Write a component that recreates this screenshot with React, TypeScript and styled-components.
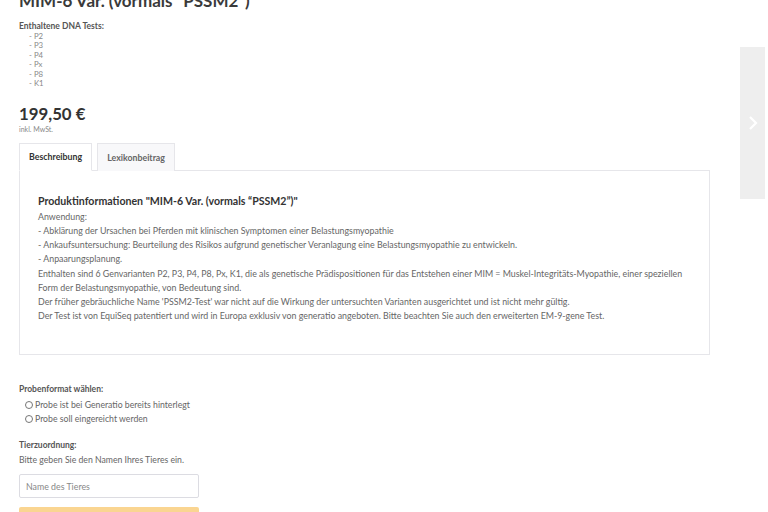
import * as React from 'react'
import styled, { createGlobalStyle } from 'styled-components'

const GlobalStyle = createGlobalStyle`
  html, body {
    margin: 0;
    padding: 0;
    background: #fff;
    font-family: Lato, "Open Sans", sans-serif;
    color: #666;
  }
`

const tests = ['P2', 'P3', 'P4', 'Px', 'P8', 'K1']

const infoLines = [
  'Anwendung:',
  '- Abklärung der Ursachen bei Pferden mit klinischen Symptomen einer Belastungsmyopathie',
  '- Ankaufsuntersuchung: Beurteilung des Risikos aufgrund genetischer Veranlagung eine Belastungsmyopathie zu entwickeln.',
  '- Anpaarungsplanung.',
  'Enthalten sind 6 Genvarianten P2, P3, P4, P8, Px, K1, die als genetische Prädispositionen für das Entstehen einer MIM = Muskel-Integritäts-Myopathie, einer speziellen Form der Belastungsmyopathie, von Bedeutung sind.',
  "Der früher gebräuchliche Name 'PSSM2-Test' war nicht auf die Wirkung der untersuchten Varianten ausgerichtet und ist nicht mehr gültig.",
  'Der Test ist von EquiSeq patentiert und wird in Europa exklusiv von generatio angeboten. Bitte beachten Sie auch den erweiterten EM-9-gene Test.',
]

export default function App() {
  const [tab, setTab] = React.useState(0)
  return (
    <>
      <GlobalStyle />
      <Page>
        <Title>MIM-6 Var. (vormals “PSSM2”)</Title>

        <Label>Enthaltene DNA Tests:</Label>
        <TestList>
          {tests.map(t => (
            <li key={t}>- {t}</li>
          ))}
        </TestList>

        <Price>199,50 €</Price>
        <Tax>inkl. MwSt.</Tax>

        <Tabs>
          <Tab active={tab === 0} onClick={() => setTab(0)}>
            Beschreibung
          </Tab>
          <Tab active={tab === 1} onClick={() => setTab(1)}>
            Lexikonbeitrag
          </Tab>
        </Tabs>
        <Panel>
          <PanelHeading>Produktinformationen "MIM-6 Var. (vormals “PSSM2”)"</PanelHeading>
          <PanelText>
            {infoLines.map((l, i) => (
              <span key={i}>
                {l}
                <br />
              </span>
            ))}
          </PanelText>
        </Panel>

        <Section>
          <Label>Probenformat wählen:</Label>
          <Radios>
            <RadioRow>
              <input type="radio" name="probe" />
              Probe ist bei Generatio bereits hinterlegt
            </RadioRow>
            <RadioRow>
              <input type="radio" name="probe" />
              Probe soll eingereicht werden
            </RadioRow>
          </Radios>
        </Section>

        <Section>
          <Label>Tierzuordnung:</Label>
          <Hint>Bitte geben Sie den Namen Ihres Tieres ein.</Hint>
          <NameInput placeholder="Name des Tieres" />
          <CartButton />
        </Section>
      </Page>

      <NextArrow aria-label="Weiter">
        <svg width="10" height="16" viewBox="0 0 10 16">
          <path d="M2 2l6 6-6 6" fill="none" stroke="#fff" strokeWidth="2.2" />
        </svg>
      </NextArrow>
    </>
  )
}

const Page = styled.div`
  width: 691px;
  padding: 0 19px;
  margin-top: -9px;
`

const Title = styled.h1`
  margin: 0 0 9px;
  font-size: 17px;
  line-height: 20px;
  font-weight: 700;
  color: #3a3a3a;
`

const Label = styled.div`
  font-size: 8.5px;
  font-weight: 700;
  color: #555;
  line-height: 12px;
`

const TestList = styled.ul`
  list-style: none;
  margin: 0;
  padding: 0 0 0 10px;
  font-size: 7.8px;
  line-height: 9.45px;
  color: #888;
`

const Price = styled.div`
  margin-top: 15px;
  font-size: 16.8px;
  font-weight: 700;
  color: #333;
  line-height: 20px;
`

const Tax = styled.div`
  font-size: 7px;
  color: #888;
  line-height: 10px;
`

const Tabs = styled.div`
  display: flex;
  gap: 5px;
  margin-top: 9px;
`

const Tab = styled.button<{ active: boolean }>`
  height: 28px;
  padding: 0 9px;
  border: 1px solid #e6e6ea;
  border-bottom: ${p => (p.active ? '1px solid #fff' : 'none')};
  margin-bottom: -1px;
  background: ${p => (p.active ? '#fff' : '#f8f8fa')};
  font-family: inherit;
  font-size: 8.8px;
  font-weight: 700;
  color: ${p => (p.active ? '#333' : '#666')};
  cursor: pointer;
  position: relative;
  z-index: 1;
  align-self: flex-start;
`

const Panel = styled.div`
  border: 1px solid #e6e6ea;
  padding: 24px 18px 31px;
`

const PanelHeading = styled.h2`
  margin: 0 0 3px;
  font-size: 10.6px;
  font-weight: 700;
  color: #333;
  line-height: 12px;
`

const PanelText = styled.p`
  margin: 0;
  font-size: 8.84px;
  line-height: 14.2px;
  color: #666;
`

const Section = styled.div`
  margin-top: 28px;

  & + & {
    margin-top: 15px;
  }
`

const Radios = styled.div`
  display: flex;
  flex-direction: column;
  gap: 4px;
  margin-top: 5px;
  margin-left: 6px;
`

const RadioRow = styled.label`
  display: flex;
  align-items: center;
  gap: 2px;
  font-size: 8.7px;
  line-height: 10px;
  color: #666;

  > input {
    width: 8px;
    height: 8px;
    margin: 0;
  }
`

const Hint = styled.div`
  margin-top: 3px;
  font-size: 8.7px;
  line-height: 12px;
  color: #666;
`

const NameInput = styled.input`
  display: block;
  box-sizing: border-box;
  width: 180px;
  height: 24px;
  margin-top: 8px;
  padding: 0 6px;
  border: 1px solid #dcdce2;
  border-radius: 2px;
  font-family: inherit;
  font-size: 8.8px;
  color: #555;

  &::placeholder {
    color: #888;
  }
`

const CartButton = styled.div`
  width: 180px;
  height: 20px;
  margin-top: 9px;
  background: #fad591;
  border-radius: 2px;
`

const NextArrow = styled.button`
  position: absolute;
  top: 47px;
  left: 740px;
  width: 25px;
  height: 152px;
  border: none;
  padding: 0;
  background: #eeeeee;
  display: flex;
  align-items: center;
  justify-content: center;
  cursor: pointer;
`
